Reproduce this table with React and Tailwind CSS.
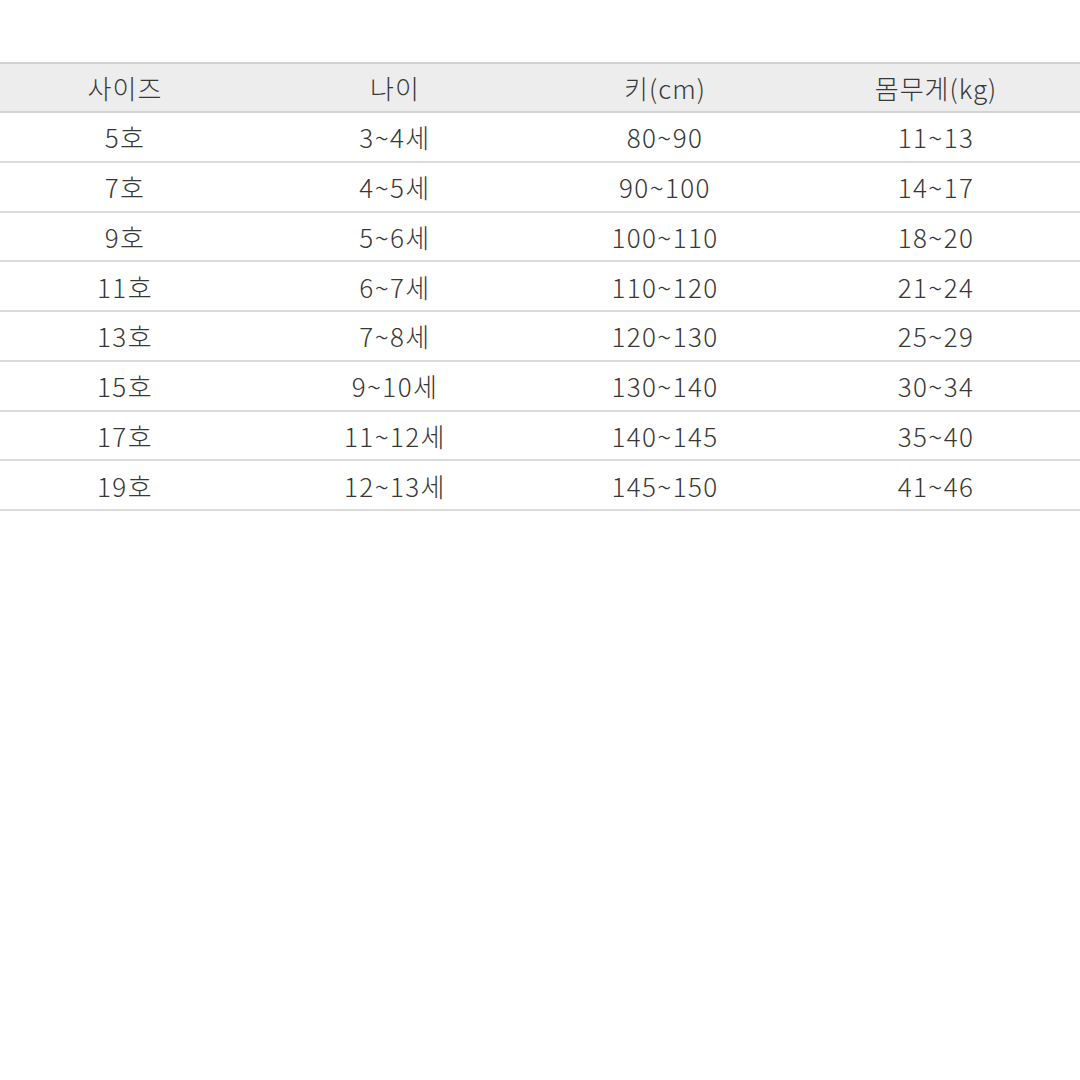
import React from 'react';

const rows = [
  ['5호', '3~4세', '80~90', '11~13'],
  ['7호', '4~5세', '90~100', '14~17'],
  ['9호', '5~6세', '100~110', '18~20'],
  ['11호', '6~7세', '110~120', '21~24'],
  ['13호', '7~8세', '120~130', '25~29'],
  ['15호', '9~10세', '130~140', '30~34'],
  ['17호', '11~12세', '140~145', '35~40'],
  ['19호', '12~13세', '145~150', '41~46'],
];

const headers = ['사이즈', '나이', '키(cm)', '몸무게(kg)'];

export default function App() {
  return (
    <div
      className="w-[1080px] h-[1080px] bg-white overflow-hidden text-[#383838]"
      style={{ fontFamily: '"Noto Sans CJK KR", "Noto Sans", sans-serif' }}
    >
      <div className="pt-[62px] ml-[-10px] w-[1090px]">
        {/* header */}
        <div className="grid grid-cols-[270px_270px_270px_280px] h-[51px] bg-[#ededed] border-t-2 border-b-2 border-[#d2d2d2]">
          {headers.map((h, i) => (
            <div key={h} className={`flex items-center justify-center text-[26px] font-light tracking-[1px] ${i === 3 ? 'pr-[8px]' : ''}`}>
              {h}
            </div>
          ))}
        </div>

        {/* body */}
        {rows.map((r) => (
          <div key={r[0]} className="grid grid-cols-[270px_270px_270px_280px] h-[49.75px] border-b-2 border-[#dadada]">
            {r.map((c, i) => (
              <div key={i} className={`flex items-center justify-center text-[26px] font-light tracking-[1.4px] ${i === 3 ? 'pr-[8px]' : ''}`}>
                {c}
              </div>
            ))}
          </div>
        ))}
      </div>
    </div>
  );
}
